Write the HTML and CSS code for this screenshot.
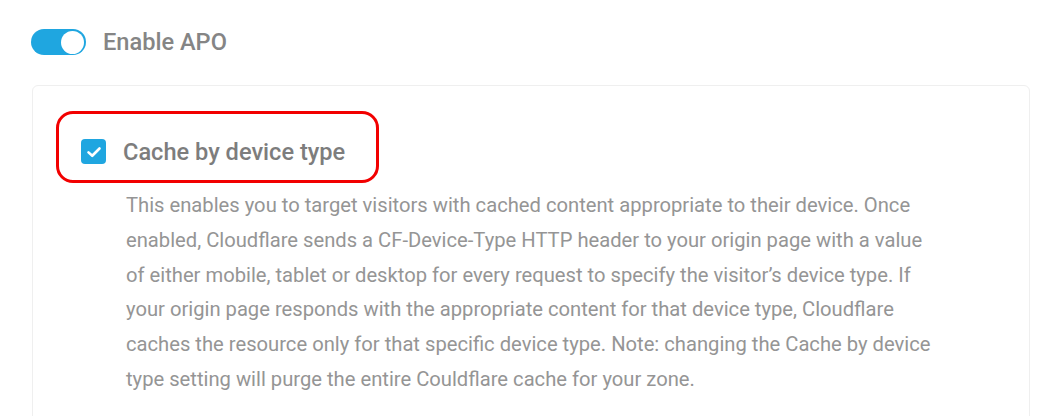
FILE: index.html
```html
<!DOCTYPE html>
<html lang="en">
<head>
    <meta charset="UTF-8">
    <meta name="viewport" content="width=device-width, initial-scale=1.0">
    <title>APO Settings</title>
    <link rel="stylesheet" href="styles.css">
</head>
<body>

    <div class="toggle-row">
        <span class="switch"><span class="knob"></span></span>
        <span class="toggle-label">Enable APO</span>
    </div>

    <div class="card">
        <div class="option-head">
            <span class="check">
                <svg width="20" height="20" viewBox="0 0 16 16">
                    <path d="M3.6 8.3 L6.6 11 L12.4 5.2" fill="none" stroke="#fff" stroke-width="2.1" stroke-linecap="round" stroke-linejoin="round"/>
                </svg>
            </span>
            <span class="option-title">Cache by device type</span>
        </div>
        <p class="option-desc">
            This enables you to target visitors with cached content appropriate to their device. Once
            enabled, Cloudflare sends a CF-Device-Type HTTP header to your origin page with a value
            of either mobile, tablet or desktop for every request to specify the visitor’s device type. If
            your origin page responds with the appropriate content for that device type, Cloudflare
            caches the resource only for that specific device type. Note: changing the Cache by device
            type setting will purge the entire Couldflare cache for your zone.
        </p>
    </div>

</body>
</html>
```

FILE: styles.css
```css
* {
    margin: 0;
    padding: 0;
    box-sizing: border-box;
}

body{
    background: #fff;
    font-family: Roboto, "Liberation Sans", sans-serif;
    overflow: hidden;
    height: 100vh;
}

.toggle-row{
    display: flex;
    align-items: center;
    gap: 17px;
    padding: 28px 0 0 31px;
}
.switch{
    display: flex;
    align-items: center;
    justify-content: flex-end;
    width: 55px;
    height: 26px;
    padding-right: 2px;
    background: #1fa6e0;
    border-radius: 13px;
}
.knob{
    width: 23px;
    height: 23px;
    background: #fff;
    border-radius: 50%;
}
.toggle-label{
    font-size: 23.6px;
    font-weight: 500;
    color: #858585;
}

.card{
    margin: 29px 0 0 32px;
    width: 998px;
    height: 400px;
    padding: 25px 0 0 23px;
    border: 1px solid #efefef;
    border-radius: 6px;
}
.option-head{
    display: flex;
    align-items: center;
    gap: 17px;
    width: 323px;
    height: 72px;
    padding: 9px 0 0 22px;
    border: 3px solid #f20000;
    border-radius: 17px;
}
.check{
    display: flex;
    align-items: center;
    justify-content: center;
    width: 25px;
    height: 25px;
    background: #1fa6e0;
    border-radius: 4px;
}
.option-title{
    font-size: 23.6px;
    font-weight: 500;
    color: #7d7d7d;
}
.option-desc{
    width: 812px;
    margin: 5px 0 0 70px;
    font-size: 20.2px;
    line-height: 34.8px;
    color: #959595;
}
```
